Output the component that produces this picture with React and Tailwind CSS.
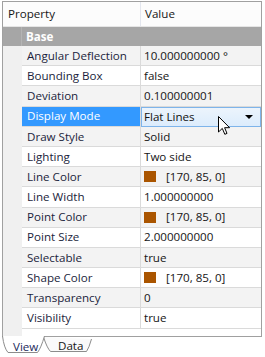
import React from 'react'

const rows = [
  { name: 'Angular Deflection', value: '10.000000000 °' },
  { name: 'Bounding Box', value: 'false' },
  { name: 'Deviation', value: '0.100000001' },
  { name: 'Display Mode', value: 'Flat Lines', selected: true },
  { name: 'Draw Style', value: 'Solid' },
  { name: 'Lighting', value: 'Two side' },
  { name: 'Line Color', value: '[170, 85, 0]', swatch: true },
  { name: 'Line Width', value: '1.000000000' },
  { name: 'Point Color', value: '[170, 85, 0]', swatch: true },
  { name: 'Point Size', value: '2.000000000' },
  { name: 'Selectable', value: 'true' },
  { name: 'Shape Color', value: '[170, 85, 0]', swatch: true },
  { name: 'Transparency', value: '0' },
  { name: 'Visibility', value: 'true' }
]

const Cursor = () => (
  <svg className="absolute left-[218px] top-[116px]" width="13" height="20" viewBox="0 0 13 20">
    <path
      d="M0.5,0.5 L0.5,16 L4.3,12.4 L6.8,18.3 L9,17.4 L6.6,11.7 L11.6,11.7 Z"
      fill="#fff"
      stroke="#000"
      strokeWidth="1"
      strokeLinejoin="miter"
    />
  </svg>
)

const Row = ({ row, index }) => {
  const shaded = index % 2 === 0
  const bg = shaded ? 'bg-[#f3f3f3]' : 'bg-white'

  return (
    <div className="flex h-[20.2px]">
      <div className="w-[19px] bg-[#f0f0f0]" />
      <div
        className={`w-[119px] flex items-center pl-[5px] border-b border-r border-[#dadada] ${
          row.selected ? 'bg-[#3399ff] text-white' : `${bg} text-[#1b1e3c]`
        }`}
      >
        {row.name}
      </div>
      {row.selected ? (
        <div className="flex-1 flex items-center justify-between pl-[2px] pr-[7px] border border-[#7eb4ea] bg-gradient-to-b from-[#ecf4fc] to-[#dcecfc] text-[#111]">
          <span>{row.value}</span>
          <svg width="8" height="4" viewBox="0 0 8 4">
            <path d="M0,0 L8,0 L4,4 Z" fill="#000" />
          </svg>
        </div>
      ) : (
        <div className={`flex-1 flex items-center pl-[3px] border-b border-[#dadada] text-[#161616] ${bg}`}>
          {row.swatch && <span className="w-[12px] h-[11px] bg-[#aa5500] mr-[10px]" />}
          {row.value}
        </div>
      )}
    </div>
  )
}

const App = () => {
  return (
    <div
      className="relative w-[265px] h-[357px] bg-white text-[11.6px] leading-none"
      style={{ fontFamily: '"Open Sans", "Noto Sans", sans-serif' }}
    >
      <div className="pt-[1px] pl-[2px]">
        {/* Property grid frame */}
        <div className="w-[260px] h-[336px] border border-[#a0a0a0] flex flex-col bg-white">
          <div className="flex h-[25px] bg-[#fcfcfc] border-b border-[#e5e5e5] text-[#161616]">
            <div className="w-[138px] flex items-center pl-[5px] border-r border-[#e3e6ee]">Property</div>
            <div className="flex-1 flex items-center pl-[4px]">Value</div>
          </div>

          <div className="flex h-[19px] bg-[#a6a6a6] text-white font-bold">
            <div className="w-[19px] border-r border-[#b4b4b4]" />
            <div className="flex items-center pl-[4px]">Base</div>
          </div>

          {rows.map((row, i) => (
            <Row key={row.name} row={row} index={i} />
          ))}

          <div className="flex flex-1">
            <div className="w-[19px] bg-[#f0f0f0]" />
            <div className="flex-1 bg-white" />
          </div>
        </div>

        {/* Tabs */}
        <div className="relative h-[18px] w-[100px]">
          <svg className="absolute left-[-2px] top-[-1px]" width="100" height="19" viewBox="0 0 100 19">
            <path d="M43.5,1 Q47,12 50.5,15.5 L86.5,15.5 Q89,12 91.5,3" fill="#fafafa" stroke="#8c8c8c" />
            <path d="M2.5,0 Q4,12 8,16.5 L37.5,16.5 Q41,12 44.5,0" fill="#fff" stroke="#8c8c8c" />
          </svg>
          <span className="absolute left-[11px] top-[4px] text-[#1b2a5c]">View</span>
          <span className="absolute left-[56px] top-[3px] text-[#161616]">Data</span>
        </div>
      </div>

      <Cursor />
    </div>
  )
}

export default App
